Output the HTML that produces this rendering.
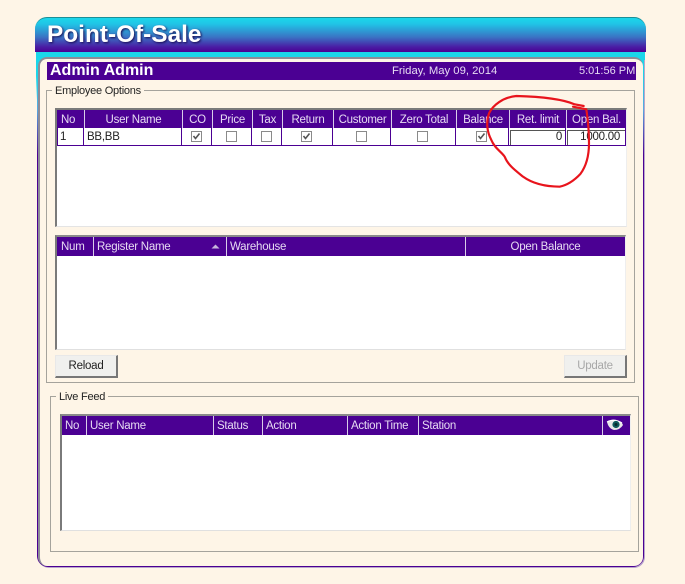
<!DOCTYPE html>
<html><head><meta charset="utf-8">
<style>
html,body{margin:0;padding:0}
body{position:relative;width:685px;height:584px;overflow:hidden;background:#fef5e7;font-family:"Liberation Sans",sans-serif;font-size:11.5px;letter-spacing:-.25px;color:#222}
div{position:absolute;box-sizing:border-box}
.t{white-space:nowrap;line-height:14px}
.hd{background:#4b0093}
.h{position:absolute;top:0;height:100%;color:#e6daf2;line-height:20px;font-size:11.5px;white-space:nowrap;border-left:1px solid #d9cce8;box-sizing:border-box}
.h.first{border-left:none}
.c{text-align:center}
.cb{width:11px;height:11px;border:1px solid #8a8a8a;background:#fff;top:131px}
.cb svg{position:absolute;left:0;top:0}
.v{position:absolute;top:128px;height:18px;width:1px;background:#4b0093}
.box{border:1px solid #a5a39c}
.lbl{background:#fef5e7;padding:0 3px;line-height:14px;white-space:nowrap;color:#222;font-size:11px;letter-spacing:-.25px}
.btn{background:#f0f0ee;border-right:2px solid #777;border-bottom:2px solid #777;border-top:1px solid #e8e8e8;border-left:1px solid #e8e8e8;text-align:center;line-height:21px}
</style></head><body>

<!-- outer frame -->
<div style="left:36px;top:52px;width:1px;height:48px;background:linear-gradient(#1ad6ea,#1ad6ea 50%,#fef5e7)"></div>
<div style="left:644px;top:52px;width:1px;height:48px;background:linear-gradient(#1ad6ea,#1ad6ea 40%,#b9a6cc)"></div>
<div style="left:38px;top:60px;width:607px;height:508px;border-radius:0 0 11px 11px;background:#b9a6cc"></div>
<div style="left:37px;top:50px;width:607px;height:517px;border-radius:0 0 11px 11px;background:linear-gradient(#1ad6ea 0,#1ad6ea 22px,#58a8e0 60px,#4b0093 105px,#4b0093 100%)"></div>
<!-- inner panel -->
<div style="left:38px;top:57px;width:605px;height:509px;background:#fef5e7;border-radius:9px 9px 9px 9px;border-top:2px solid #8d8c98;border-left:2px solid #8d8c98"></div>

<!-- title bar -->
<div style="left:35px;top:17px;width:611px;height:35px;border-radius:12px 12px 0 0;border-top:1px solid #1a8f98;background:linear-gradient(#1ad6ea 0,#20c4e6 6px,#3a74c4 19px,#4a1ca4 29px,#4b0093 34px)"></div>
<div class="t" style="left:47px;top:21px;font-size:24.4px;letter-spacing:0;line-height:28px;font-weight:bold;color:#fff;text-shadow:1px 1px 2px #1a0850">Point-Of-Sale</div>

<!-- admin bar -->
<div class="hd" style="left:47px;top:62px;width:589px;height:18px"></div>
<div class="t" style="left:50px;top:62px;font-size:16px;letter-spacing:0;line-height:18px;font-weight:bold;color:#fff">Admin Admin</div>
<div class="t" style="left:392px;top:64px;font-size:11.3px;letter-spacing:0;color:#e6daf2">Friday, May 09, 2014</div>
<div class="t" style="left:579px;top:64px;font-size:11px;letter-spacing:0;color:#e6daf2">5:01:56 PM</div>

<!-- employee group -->
<div class="box" style="left:46px;top:90px;width:589px;height:293px"></div>
<div class="lbl" style="left:52px;top:84px">Employee Options</div>

<!-- grid 1 -->
<div style="left:55px;top:108px;width:572px;height:119px;background:#fff;border-top:2px solid #7a7a7a;border-left:2px solid #7a7a7a;border-right:1px solid #eee;border-bottom:1px solid #e4e4e4"></div>
<div class="hd" style="left:57px;top:110px;width:569px;height:18px;overflow:visible">
<span class="h first" style="left:0;width:27px;padding-left:4px">No</span>
<span class="h c" style="left:27px;width:98px">User Name</span>
<span class="h c" style="left:125px;width:30px">CO</span>
<span class="h c" style="left:155px;width:40px">Price</span>
<span class="h c" style="left:195px;width:30px">Tax</span>
<span class="h c" style="left:225px;width:51px">Return</span>
<span class="h c" style="left:276px;width:58px">Customer</span>
<span class="h c" style="left:334px;width:65px">Zero Total</span>
<span class="h c" style="left:399px;width:53px">Balance</span>
<span class="h c" style="left:452px;width:57px">Ret. limit</span>
<span class="h c" style="left:509px;width:60px">Open Bal.</span>
</div>
<!-- row -->
<div style="left:57px;top:128px;width:569px;height:18px;border-bottom:1px solid #4b0093;border-left:1px solid #4b0093;border-right:1px solid #4b0093;background:#fff"></div>
<span class="v" style="left:83px"></span><span class="v" style="left:181px"></span><span class="v" style="left:211px"></span><span class="v" style="left:251px"></span><span class="v" style="left:281px"></span><span class="v" style="left:332px"></span><span class="v" style="left:390px"></span><span class="v" style="left:455px"></span><span class="v" style="left:508px"></span><span class="v" style="left:565px"></span>
<div class="t" style="left:60px;top:130px">1</div>
<div class="t" style="left:87px;top:130px">BB,BB</div>

<div class="cb" style="left:191px"><svg width="9" height="9"><path d="M1.5 4 L3.5 6.5 L7.5 1.5" fill="none" stroke="#555" stroke-width="1.6"/></svg></div>
<div class="cb" style="left:226px"></div>
<div class="cb" style="left:261px"></div>
<div class="cb" style="left:301px"><svg width="9" height="9"><path d="M1.5 4 L3.5 6.5 L7.5 1.5" fill="none" stroke="#555" stroke-width="1.6"/></svg></div>
<div class="cb" style="left:356px"></div>
<div class="cb" style="left:417px"></div>
<div class="cb" style="left:476px"><svg width="9" height="9"><path d="M1.5 4 L3.5 6.5 L7.5 1.5" fill="none" stroke="#555" stroke-width="1.6"/></svg></div>

<div style="left:510px;top:130px;width:55px;height:15px;border-top:1px solid #555;border-left:1px solid #555;background:#fff"></div>
<div style="left:567px;top:130px;width:58px;height:15px;border-top:1px solid #555;border-left:1px solid #555;background:#fff"></div>
<div class="t" style="left:510px;top:130px;width:52px;text-align:right">0</div>
<div class="t" style="left:567px;top:130px;width:53px;text-align:right">1000.00</div>

<!-- grid 2 -->
<div style="left:55px;top:235px;width:571px;height:115px;background:#fff;border-top:2px solid #8a8a8a;border-left:2px solid #7a7a7a;border-right:1px solid #eee;border-bottom:1px solid #e0e0e0"></div>
<div class="hd" style="left:57px;top:237px;width:568px;height:19px">
<span class="h first" style="left:0;width:36px;padding-left:4px">Num</span>
<span class="h" style="left:36px;width:133px;padding-left:3px">Register Name</span>
<span class="h" style="left:169px;width:239px;padding-left:3px">Warehouse</span>
<span class="h c" style="left:408px;width:160px">Open Balance</span>
</div>
<svg style="position:absolute;left:211px;top:244px" width="9" height="5"><path d="M0.5 4.5 L4.5 0.5 L8.5 4.5 Z" fill="#c6b4dc"/></svg>

<div class="btn" style="left:55px;top:355px;width:63px;height:23px">Reload</div>
<div class="btn" style="left:564px;top:355px;width:63px;height:23px;color:#a8a8a8">Update</div>

<!-- live feed group -->
<div class="box" style="left:50px;top:396px;width:589px;height:156px"></div>
<div class="lbl" style="left:56px;top:390px">Live Feed</div>

<!-- grid 3 -->
<div style="left:60px;top:414px;width:571px;height:117px;background:#fff;border-top:2px solid #8a8a8a;border-left:2px solid #7a7a7a;border-right:1px solid #eee;border-bottom:1px solid #e0e0e0"></div>
<div class="hd" style="left:62px;top:416px;width:568px;height:19px">
<span class="h first" style="left:0;width:24px;padding-left:3px">No</span>
<span class="h" style="left:24px;width:127px;padding-left:3px">User Name</span>
<span class="h" style="left:151px;width:49px;padding-left:3px">Status</span>
<span class="h" style="left:200px;width:85px;padding-left:3px">Action</span>
<span class="h" style="left:285px;width:71px;padding-left:3px">Action Time</span>
<span class="h" style="left:356px;width:184px;padding-left:3px">Station</span>
<span class="h" style="left:540px;width:28px"></span>
</div>
<svg style="position:absolute;left:606px;top:418px" width="18" height="14" viewBox="0 0 18 14">
<path d="M1 4 Q8 -1 16 5 L17 7 Q14 12 8 12 Q4 11 2 7 Z" fill="#e8e8e8"/>
<path d="M1 4 Q8 0 16 5" fill="none" stroke="#fff" stroke-width="1.2"/>
<circle cx="10" cy="6.5" r="3.6" fill="#0e5a5c"/>
<circle cx="10" cy="6.5" r="1.5" fill="#06282c"/>
</svg>

<!-- red annotation -->
<svg style="position:absolute;left:0;top:0" width="685" height="584">
<g transform="translate(343,0) scale(0.33333)">
<path d="M722 318 L695 313 C660 298 600 290 520 288 C480 292 450 315 438 340 C428 370 432 395 445 420 C455 445 475 455 485 470 C495 495 515 510 540 530 C565 548 600 560 650 560 C675 555 695 540 712 522 C732 495 738 465 738 430 C738 395 735 360 730 328 L690 320" fill="none" stroke="#e8141c" stroke-width="6.5" stroke-linecap="round" stroke-linejoin="round"/>
</g>
</svg>
</body></html>
